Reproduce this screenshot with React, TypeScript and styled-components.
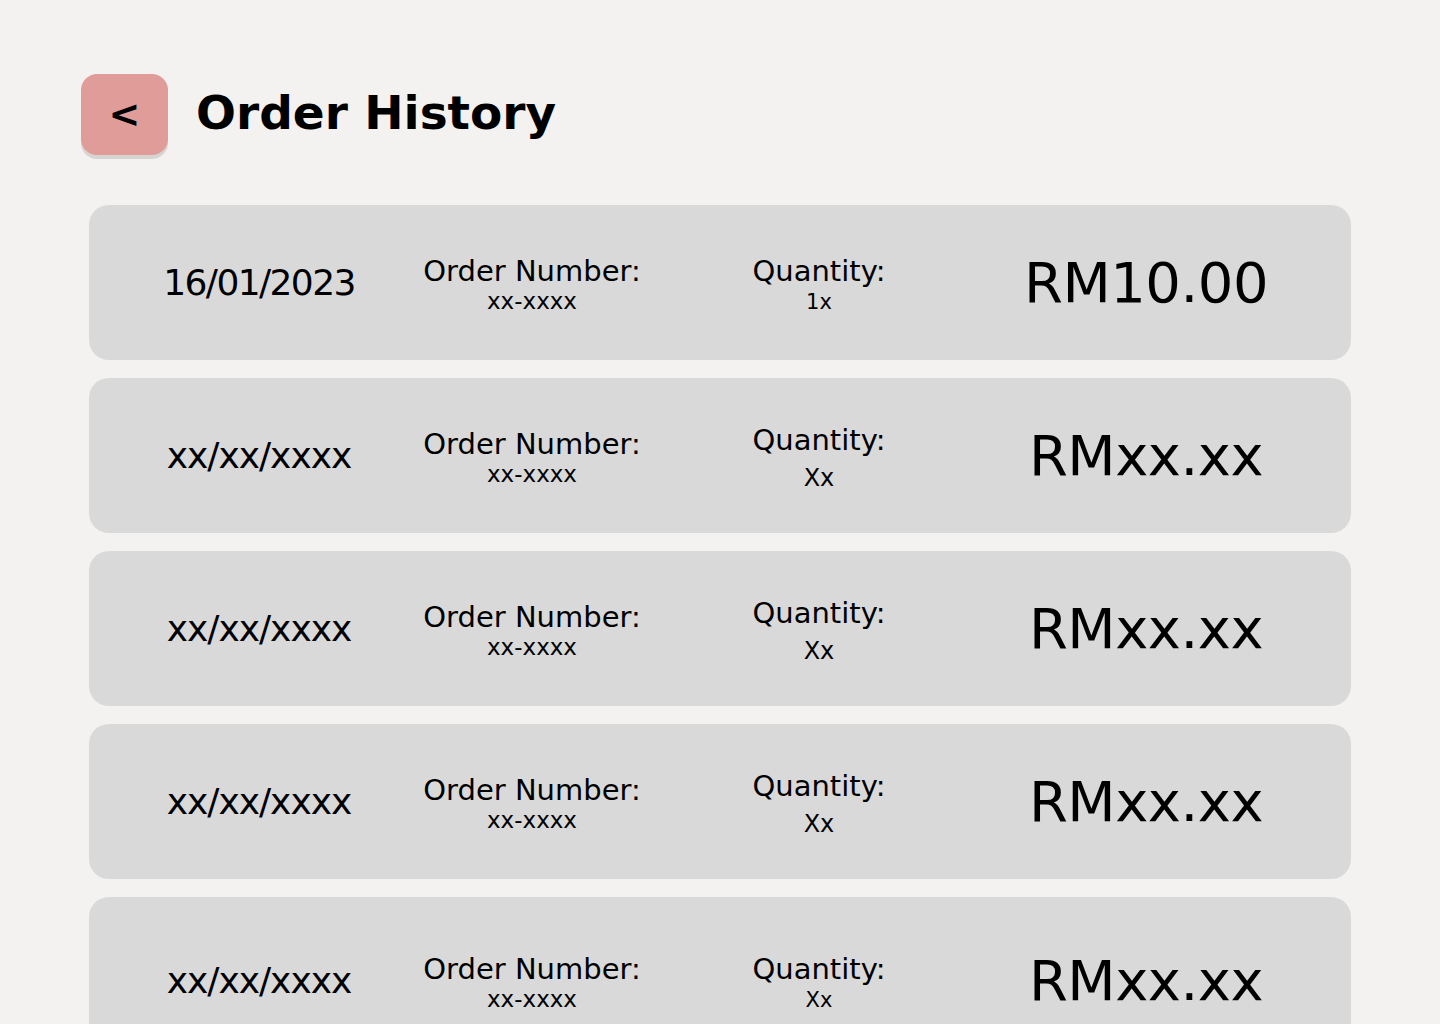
import React from "react";
import styled, { createGlobalStyle } from "styled-components";

const Global = createGlobalStyle`
  html, body { margin: 0; padding: 0; background: #f3f2f0; }
  body { font-family: "DejaVu Sans", "Open Sans", sans-serif; color: #000; }
  * { box-sizing: border-box; }
`;

const Page = styled.div`
  width: 1440px;
  height: 1024px;
  overflow: hidden;
  padding: 74px 89px 0 81px;
`;

const Header = styled.header`
  display: flex;
  align-items: center;
  gap: 28px;
  height: 81px;
`;

const BackButton = styled.button`
  width: 87px;
  height: 81px;
  border: none;
  border-radius: 16px;
  background: #e09c98;
  box-shadow: 0 4px 0 #d8d4d2;
  font-family: "DejaVu Sans", sans-serif;
  font-weight: 700;
  font-size: 38px;
  color: #000;
  display: flex;
  align-items: center;
  justify-content: center;
  padding: 0 0 2px;
  cursor: pointer;
`;

const Title = styled.h1`
  margin: 0 0 4px;
  font-size: 47px;
  font-weight: 700;
`;

const List = styled.div`
  display: flex;
  flex-direction: column;
  gap: 18px;
  margin-top: 50px;
  margin-left: 8px;
`;

const Card = styled.div<{ $tall?: boolean }>`
  height: ${(p) => (p.$tall ? 166 : 155)}px;
  border-radius: 20px;
  background: #d9d9d9;
  display: grid;
  grid-template-columns: 240px 306px 268px 386px;
  padding-left: 50px;
  align-items: center;
  justify-items: center;
`;

const DateText = styled.div<{ $tight?: boolean }>`
  font-size: 36px;
  letter-spacing: ${(p) => (p.$tight ? -1.6 : -1)}px;
`;

const Field = styled.div`
  display: flex;
  flex-direction: column;
  align-items: center;
  line-height: 1;
  margin-top: 5px;
`;

const Label = styled.div`
  font-size: 29px;
`;

const Sub = styled.div<{ $size: number; $gap: number }>`
  font-size: ${(p) => p.$size}px;
  margin-top: ${(p) => p.$gap}px;
`;

const Price = styled.div`
  font-size: 56px;
  letter-spacing: -0.5px;
`;

type Order = {
  date: string;
  num: string;
  qty: string;
  qtySize: number;
  qtyGap: number;
  price: string;
};

const orders: Order[] = [
  { date: "16/01/2023", num: "xx-xxxx", qty: "1x", qtySize: 21, qtyGap: 6, price: "RM10.00" },
  { date: "xx/xx/xxxx", num: "xx-xxxx", qty: "Xx", qtySize: 24, qtyGap: 11, price: "RMxx.xx" },
  { date: "xx/xx/xxxx", num: "xx-xxxx", qty: "Xx", qtySize: 24, qtyGap: 11, price: "RMxx.xx" },
  { date: "xx/xx/xxxx", num: "xx-xxxx", qty: "Xx", qtySize: 24, qtyGap: 11, price: "RMxx.xx" },
  { date: "xx/xx/xxxx", num: "xx-xxxx", qty: "Xx", qtySize: 21, qtyGap: 6, price: "RMxx.xx" },
];

export default function App() {
  return (
    <>
      <Global />
      <Page>
        <Header>
          <BackButton aria-label="Back">&lt;</BackButton>
          <Title>Order History</Title>
        </Header>
        <List>
          {orders.map((o, i) => (
            <Card key={i} $tall={i === orders.length - 1}>
              <DateText $tight={/\d/.test(o.date)}>{o.date}</DateText>
              <Field>
                <Label>Order Number:</Label>
                <Sub $size={23} $gap={4}>{o.num}</Sub>
              </Field>
              <Field>
                <Label>Quantity:</Label>
                <Sub $size={o.qtySize} $gap={o.qtyGap}>{o.qty}</Sub>
              </Field>
              <Price>{o.price}</Price>
            </Card>
          ))}
        </List>
      </Page>
    </>
  );
}
